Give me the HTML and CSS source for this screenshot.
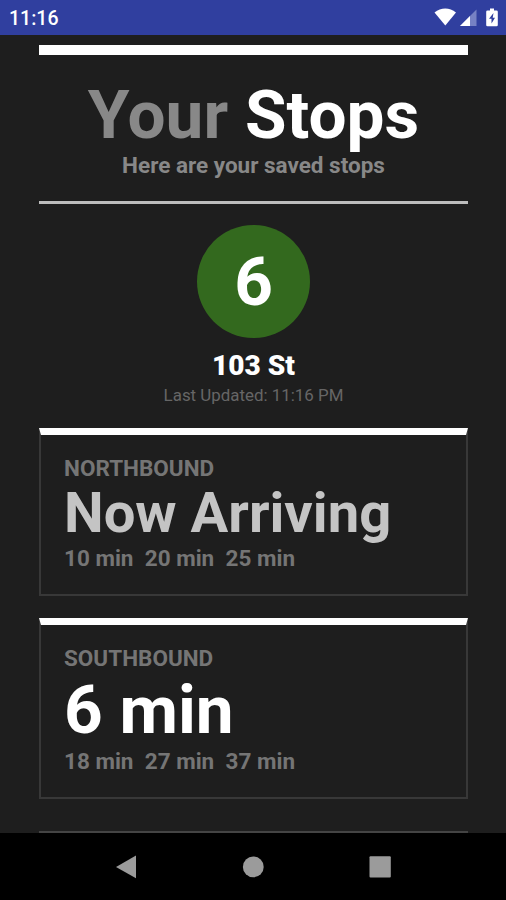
FILE: index.html
```html
<!DOCTYPE html>
<html lang="en">
<head>
    <meta charset="UTF-8">
    <meta name="viewport" content="width=device-width, initial-scale=1.0">
    <title>Your Stops</title>
    <link rel="stylesheet" href="styles.css">
</head>
<body>
    <div class="status-bar">
        <span class="clock">11:16</span>
        <svg class="status-icons" width="66" height="22" viewBox="0 0 66 22">
            <path d="M0.5 5.500C7 0.300 15.500 0.300 22 5.500L11.300 18.500Z" fill="#fff"/>
            <path d="M42.500 2.500V19H26Z" fill="#7681c4"/>
            <path d="M36 9V19H26Z" fill="#fff"/>
            <path d="M56 1.500h4v2h2.500q1.300 0 1.300 1.300V18q0 1.300-1.300 1.300h-9q-1.300 0-1.300-1.300V4.800q0-1.300 1.300-1.300H56Z" fill="#fff"/>
            <path d="M59.500 6L55 11.800h2.500V16.500L61 10.800h-2.300Z" fill="#303f9f"/>
        </svg>
    </div>

    <div class="content">
        <div class="header">
            <h1><span class="light">Your</span> Stops</h1>
            <p>Here are your saved stops</p>
        </div>

        <div class="stop">
            <div class="route">6</div>
            <h2>103 St</h2>
            <p class="updated">Last Updated: 11:16 PM</p>
        </div>

        <div class="card">
            <h3>Northbound</h3>
            <div class="next arriving">Now Arriving</div>
            <div class="times">
                <span>10 min</span>
                <span>20 min</span>
                <span>25 min</span>
            </div>
        </div>

        <div class="card">
            <h3>Southbound</h3>
            <div class="next">6 min</div>
            <div class="times">
                <span>18 min</span>
                <span>27 min</span>
                <span>37 min</span>
            </div>
        </div>

        <div class="divider"></div>
    </div>

    <div class="nav-bar">
        <svg width="24" height="24" viewBox="0 0 24 24"><path d="M2 12L22 0.500V23.200Z" fill="#9b9b9b"/></svg>
        <svg width="24" height="24" viewBox="0 0 24 24"><circle cx="12.300" cy="11.900" r="10.400" fill="#9b9b9b"/></svg>
        <svg width="24" height="24" viewBox="0 0 24 24"><rect x="1.500" y="1.200" width="21.300" height="21.300" rx="1" fill="#9b9b9b"/></svg>
    </div>
</body>
</html>
```
FILE: styles.css
```css
* {
    box-sizing: border-box;
}
body {
    display: flex;
    flex-direction: column;
    height: 900px;
    margin: 0;
    overflow: hidden;
    font-family: Roboto, sans-serif;
    font-weight: bold;
    color: #fff;
    background-color: #1e1e1e;
}
h1, h2, h3, p {
    margin: 0;
}
.status-bar {
    display: flex;
    flex: none;
    align-items: center;
    justify-content: space-between;
    height: 34.500px;
    padding: 0 6px 0 9px;
    background-color: #303f9f;
}
.status-icons {
    margin-top: 1px;
}
.clock {
    font-size: 19.500px;
    font-weight: 500;
    padding-top: 2px;
}
.content {
    flex: 1;
    min-height: 0;
    overflow: hidden;
    padding: 10px 38px 0 39px;
}
.header {
    height: 159.500px;
    border-top: 10px solid #fff;
    border-bottom: 3px solid #bdbdbd;
    padding-top: 26px;
    text-align: center;
}
.header h1 {
    font-size: 67.500px;
    line-height: 68px;
}
.header .light {
    color: #888;
}
.header p {
    margin-top: 4px;
    font-size: 22.500px;
    line-height: 24px;
    color: #888;
}
.stop {
    display: flex;
    flex-direction: column;
    align-items: center;
    height: 224px;
    padding-top: 21px;
}
.route {
    width: 113px;
    height: 113px;
    border-radius: 50%;
    background-color: #33691e;
    font-size: 67.500px;
    line-height: 114px;
    text-align: center;
}
.stop h2 {
    margin-top: 12px;
    font-size: 28px;
    font-weight: 900;
    line-height: 32px;
}
.updated {
    margin-top: 3px;
    font-size: 16.900px;
    font-weight: normal;
    line-height: 20px;
    color: #666;
}
.card {
    margin-bottom: 22px;
    padding: 21px 22px 24px 23px;
    border: 2px solid #383838;
    border-top: 7px solid #fff;
}
.card h3 {
    font-size: 22.500px;
    line-height: 24px;
    text-transform: uppercase;
    color: #757575;
}
.next {
    margin: 6px 0 5px;
    font-size: 67.500px;
    line-height: 68px;
}
.arriving {
    margin: 5px 0;
    font-size: 56.200px;
    line-height: 56px;
    color: #c4c4c4;
}
.times {
    display: flex;
    gap: 11.300px;
    font-size: 22.500px;
    line-height: 24px;
    color: #757575;
}
.divider {
    height: 3px;
    margin-top: 32px;
    background-color: #444;
}
.nav-bar {
    display: flex;
    flex: none;
    align-items: center;
    justify-content: space-between;
    height: 67px;
    padding: 0 114px 0 113.500px;
    background-color: #000;
}
```
